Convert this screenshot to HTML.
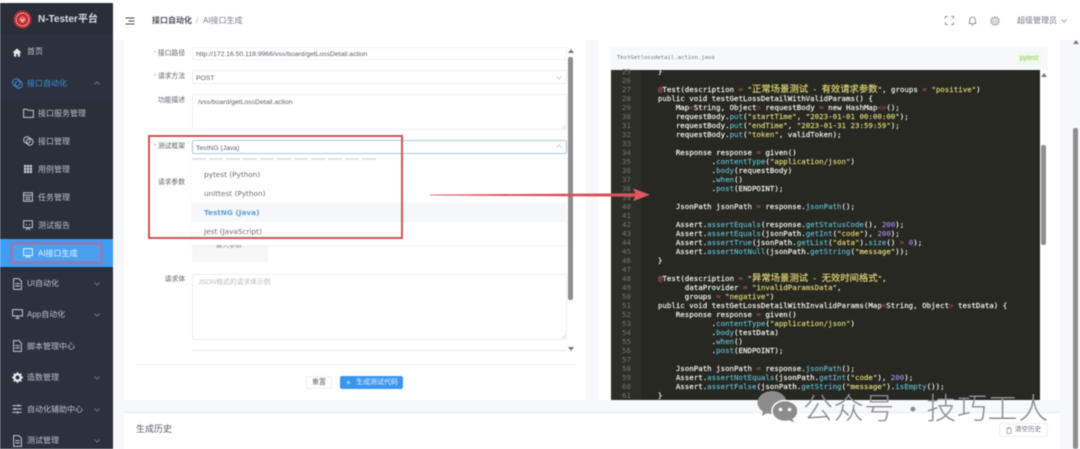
<!DOCTYPE html>
<html lang="zh"><head><meta charset="utf-8"><title>AI接口生成</title>
<style>
*{box-sizing:border-box}
html,body{margin:0;padding:0;width:1080px;height:449px;overflow:hidden;background:#f6f8fb}
body{font-family:"Liberation Sans","Noto Sans CJK SC",sans-serif;color:#606266;position:relative}
#root{position:absolute;left:0;top:0;width:1080px;height:449px;overflow:hidden;filter:blur(.45px)}
.a{position:absolute;white-space:nowrap}
.side{position:absolute;left:0;top:3px;width:113px;height:446px;background:#2c313d}
.sub{position:absolute;left:0;top:96px;width:113px;height:172px;background:#2a2f3a}
.m{position:absolute;font-size:8px;line-height:12px;color:#bcc2cc;white-space:nowrap}
.ic{position:absolute;fill:none;stroke:#c3c8d1;stroke-width:1}
.chev{position:absolute;left:94px;width:6px;height:4px;fill:none;stroke:#7d8492;stroke-width:.8}
.lb{position:absolute;font-size:6.8px;line-height:12px;color:#606266;white-space:nowrap;text-align:right;right:895px}
.in{position:absolute;left:192px;width:375px;background:#fff;border:1px solid #eceef1;border-radius:2px;font-size:6.8px;line-height:11px;padding:1px 3px;color:#5c5f66;white-space:nowrap}
.sb{position:absolute;background:#8e8e8e;border-radius:2px}
.tri{position:absolute;width:0;height:0;border-left:3px solid transparent;border-right:3px solid transparent}
.up{border-bottom:4px solid #777}.dn{border-top:4px solid #777}
pre{margin:0;font-family:"DejaVu Sans Mono","Liberation Mono","Noto Sans CJK SC",monospace;font-size:7.45px;line-height:9.02px;position:absolute;font-weight:400}
#code{left:640px;top:66.6px;color:#f8f8f2;width:400px;height:334px;overflow:hidden;-webkit-text-stroke:.15px currentColor}
#nums{left:622px;top:66.6px;color:#74756c;height:334px;overflow:hidden}
i{font-style:normal}
.s{color:#e2d878}.f{color:#5db8c9}.o{color:#a5504f}.n{color:#a583e0}.r{color:#c9504a}
.z{font-size:9.35px;line-height:0;font-family:"Noto Sans CJK SC",sans-serif}
.opt{position:absolute;left:204px;font-family:"DejaVu Sans",sans-serif;font-size:7.3px;line-height:12px;color:#6a6d73;white-space:nowrap}
</style></head><body><div id="root">

<div class="a" style="left:0;top:0;width:1080px;height:3px;background:#fff"></div>
<div class="a" style="left:113px;top:3px;width:967px;height:37px;background:#fff"></div>

<!-- Sidebar -->
<div class="side"><div class="sub"></div></div>
<div class="a" style="left:0;top:4px;width:113px;height:30px;background:#292e39"></div>
<svg class="a" style="left:13px;top:10px" width="19" height="19" viewBox="0 0 19 19"><circle cx="9.5" cy="9.5" r="9" fill="#b9272f"/><circle cx="9.5" cy="9.5" r="6.4" fill="none" stroke="#eec9b8" stroke-width="1.4" stroke-dasharray="1.5 1"/><circle cx="9.5" cy="9.5" r="3.6" fill="#d9595c"/><path d="M7.5 8.5l2 3 2-3" fill="none" stroke="#f5dcd0"/></svg>
<div class="a" style="left:38px;top:13px;font-size:10px;line-height:14px;font-weight:700;color:#d8dbe1">N-Tester平台</div>

<svg class="a" style="left:12px;top:48px" width="10" height="9" viewBox="0 0 10 9"><path d="M5 .5L.5 4.6H2v4h2.2V6h1.6v2.6H8v-4h1.5z" fill="#e6e8ec"/></svg>
<div class="m" style="left:27px;top:46px">首页</div>

<svg class="ic" style="left:12px;top:78px;stroke:#3f8fd8" width="11" height="11" viewBox="0 0 11 11"><circle cx="4.5" cy="4.5" r="3.8"/><circle cx="6.8" cy="6.6" r="3.6"/></svg>
<div class="m" style="left:27px;top:78px;color:#3c8fdc">接口自动化</div>
<svg class="chev" style="top:81px" viewBox="0 0 6 4"><path d="M.5 3.5L3 1l2.5 2.5"/></svg>

<svg class="ic" style="left:23px;top:108px" width="11" height="10" viewBox="0 0 11 10"><path d="M.6 1.2h3.4l1 1.2h5.4v7H.6z"/></svg>
<div class="m" style="left:38px;top:108px">接口服务管理</div>
<svg class="ic" style="left:23px;top:136px" width="11" height="10" viewBox="0 0 11 10"><circle cx="4" cy="4" r="3.3"/><circle cx="6.8" cy="5.8" r="3.3"/></svg>
<div class="m" style="left:38px;top:136px">接口管理</div>
<svg class="a" style="left:24px;top:165px" width="8" height="8" viewBox="0 0 8 8" fill="#d6d9df"><path d="M0 0h2.2v2.2H0zM2.9 0h2.2v2.2H2.9zM5.8 0H8v2.2H5.8zM0 2.9h2.2v2.2H0zM2.9 2.9h2.2v2.2H2.9zM5.8 2.9H8v2.2H5.8zM0 5.8h2.2V8H0zM2.9 5.8h2.2V8H2.9zM5.8 5.8H8V8H5.8z"/></svg>
<div class="m" style="left:38px;top:164px">用例管理</div>
<svg class="ic" style="left:23px;top:192px" width="10" height="10" viewBox="0 0 10 10"><path d="M.6.8h8.8v8.4H.6zM.6 3.2h8.8M2.4 5.4h5M2.4 7.4h5"/></svg>
<div class="m" style="left:38px;top:192px">任务管理</div>
<svg class="ic" style="left:23px;top:220px" width="10" height="11" viewBox="0 0 10 11"><path d="M.6.8h8.8v6.8H.6zM3 10l2-2.4L7 10M3 4.6h1M6 4.6h1"/></svg>
<div class="m" style="left:38px;top:220px">测试报告</div>

<div class="a" style="left:0;top:239px;width:113px;height:28px;background:#3d9cf3"></div>
<div class="a" style="left:10px;top:242px;width:93px;height:22px;border:3px solid #8f7ab8;border-radius:3px;background:#4aa0ef"></div>
<svg class="ic" style="left:23px;top:248px;stroke:#e6f1fc" width="10" height="11" viewBox="0 0 10 11"><path d="M.6.8h8.8v6.8H.6zM3 10l2-2.4L7 10M3 4.6h1M6 4.6h1"/></svg>
<div class="m" style="left:38px;top:248px;color:#e8f2fc">AI接口生成</div>

<svg class="ic" style="left:13px;top:278px" width="9" height="12" viewBox="0 0 9 12"><path d="M.6.6h5.2l2.6 2.6v8.2H.6zM2.2 5.6h4.6M2.2 8h4.6"/></svg>
<div class="m" style="left:27px;top:278px">UI自动化</div>
<svg class="chev" style="top:282px" viewBox="0 0 6 4"><path d="M.5.5L3 3l2.5-2.5"/></svg>

<svg class="ic" style="left:12px;top:309px" width="11" height="10" viewBox="0 0 11 10"><path d="M.6.6h9.8v6.4H.6zM3.4 9.4h4.2M5.5 7v2.4"/></svg>
<div class="m" style="left:27px;top:309px">App自动化</div>
<svg class="chev" style="top:313px" viewBox="0 0 6 4"><path d="M.5.5L3 3l2.5-2.5"/></svg>

<svg class="ic" style="left:13px;top:340px" width="9" height="12" viewBox="0 0 9 12"><path d="M.6.6h5.2l2.6 2.6v8.2H.6zM2.2 5.6h4.6M2.2 8h4.6"/></svg>
<div class="m" style="left:27px;top:341px">脚本管理中心</div>

<svg class="a" style="left:12px;top:372px" width="11" height="11" viewBox="0 0 11 11"><circle cx="5.5" cy="5.5" r="3.2" fill="none" stroke="#e6e8ec" stroke-width="2.4"/><path d="M5.5 0v2M5.5 9v2M0 5.5h2M9 5.5h2M1.6 1.6l1.4 1.4M8 8l1.4 1.4M1.6 9.4L3 8M8 3l1.4-1.4" stroke="#e6e8ec" stroke-width="1.4"/></svg>
<div class="m" style="left:27px;top:372px">造数管理</div>
<svg class="chev" style="top:376px" viewBox="0 0 6 4"><path d="M.5.5L3 3l2.5-2.5"/></svg>

<svg class="ic" style="left:12px;top:404px" width="10" height="10" viewBox="0 0 10 10"><path d="M.4 1.6h9.2M.4 5h9.2M.4 8.4h9.2M6.4.4v2.4M2.8 3.8v2.4M5.6 7.2v2.4"/></svg>
<div class="m" style="left:27px;top:404px">自动化辅助中心</div>
<svg class="chev" style="top:408px" viewBox="0 0 6 4"><path d="M.5.5L3 3l2.5-2.5"/></svg>

<svg class="ic" style="left:13px;top:435px" width="9" height="12" viewBox="0 0 9 12"><path d="M.6.6h5.2l2.6 2.6v8.2H.6zM2.2 5.6h4.6M2.2 8h4.6"/></svg>
<div class="m" style="left:27px;top:435px">测试管理</div>
<svg class="chev" style="top:439px" viewBox="0 0 6 4"><path d="M.5.5L3 3l2.5-2.5"/></svg>

<!-- Top bar -->
<svg class="a" style="left:125px;top:17px" width="10" height="8" viewBox="0 0 10 8" fill="none" stroke="#444" stroke-width="1.1"><path d="M.5 1h9M3.5 4h6M.5 7h9"/></svg>
<div class="a" style="left:152px;top:15px;font-size:8px;line-height:12px;font-weight:700;color:#4f5258">接口自动化</div>
<div class="a" style="left:196px;top:15px;font-size:8px;line-height:12px;color:#a9acb2">/</div>
<div class="a" style="left:203px;top:15px;font-size:8px;line-height:12px;color:#7b7e84">AI接口生成</div>
<svg class="a" style="left:945px;top:16px" width="9" height="9" viewBox="0 0 9 9" fill="none" stroke="#777" stroke-width=".8"><path d="M.5 2.8V.5h2.3M6.2.5h2.3v2.3M8.5 6.2v2.3H6.2M2.8 8.5H.5V6.2"/></svg>
<svg class="a" style="left:968px;top:16px" width="9" height="10" viewBox="0 0 9 10" fill="none" stroke="#777" stroke-width=".8"><path d="M.6 7.6h7.8M1.6 7.6V4a2.9 2.9 0 015.8 0v3.6M3.5 9.2h2"/></svg>
<svg class="a" style="left:990px;top:16px" width="10" height="10" viewBox="0 0 10 10" fill="none" stroke="#8a8a8a" stroke-width=".6"><circle cx="5" cy="5" r="1.5"/><circle cx="5" cy="5" r="3.3"/><circle cx="5" cy="5" r="4.3" stroke-width=".9" stroke-dasharray="1.6 1.1"/></svg>
<div class="a" style="left:1017px;top:15px;font-size:8px;line-height:12px;color:#77797f">超级管理员</div>
<svg class="a" style="left:1061px;top:19px" width="6" height="4" viewBox="0 0 6 4" fill="none" stroke="#888" stroke-width=".8"><path d="M.5.5L3 3l2.5-2.5"/></svg>

<!-- Left card -->
<div class="a" style="left:124px;top:40px;width:462px;height:360px;background:#fff"></div>
<div class="lb" style="top:48px"><span style="color:#e88;font-size:6px">* </span>接口路径</div>
<div class="in" style="top:47px;height:13px;border-color:#f0f1f4">http://172.16.50.118:9966/vss/board/getLossDetail.action</div>
<div class="lb" style="top:71px"><span style="color:#e88;font-size:6px">* </span>请求方法</div>
<div class="in" style="top:70px;height:14px;padding-top:1.5px">POST</div>
<svg class="a" style="left:556px;top:76px" width="6" height="4" viewBox="0 0 6 4" fill="none" stroke="#c6c8cc" stroke-width=".8"><path d="M.5.5L3 3l2.5-2.5"/></svg>
<div class="lb" style="top:95px">功能描述</div>
<div class="in" style="top:94px;height:36px;padding:1.5px 5px">/vss/board/getLossDetail.action</div>
<svg class="a" style="left:561px;top:124px" width="5" height="5" viewBox="0 0 5 5" fill="none" stroke="#aaa" stroke-width=".5"><path d="M1 4.5L4.5 1M3 4.5L4.5 3"/></svg>
<div class="lb" style="top:141px"><span style="color:#e88;font-size:6px">* </span>测试框架</div>
<div class="in" style="top:140px;height:14px;border-color:#a9c9da;padding-top:1.5px">TestNG (Java)</div>
<svg class="a" style="left:556px;top:144px" width="6" height="4" viewBox="0 0 6 4" fill="none" stroke="#c6c8cc" stroke-width=".8"><path d="M.5 3.5L3 1l2.5 2.5"/></svg>
<div class="a" style="left:192px;top:158px;width:185px;height:2px;background:repeating-linear-gradient(90deg,#e2e3e6 0 14px,#fff 14px 17px)"></div>
<div class="lb" style="top:177px">请求参数</div>

<div class="a" style="left:192px;top:240px;width:76px;height:22px;background:#f7f7f8"></div>
<div class="a" style="left:216px;top:241px;font-size:6.5px;line-height:9px;color:#8f9196">最大参数</div>

<!-- Dropdown -->
<div class="a" style="left:192px;top:161px;width:374px;height:84px;background:#fff;box-shadow:0 1px 3px rgba(0,0,0,.05)"></div>
<div class="a" style="left:192px;top:203px;width:374px;height:19px;background:#f5f7fa"></div>
<div class="opt" style="top:168.5px">pytest (Python)</div>
<div class="opt" style="top:187.5px">unittest (Python)</div>
<div class="opt" style="top:206.5px;color:#5aa3d8;font-weight:700">TestNG (Java)</div>
<div class="opt" style="top:225.5px">Jest (JavaScript)</div>

<div class="lb" style="top:274px">请求体</div>
<div class="in" style="top:274px;height:66px;padding:1.5px 5px;color:#b9bbc0;border-color:#eceef1">JSON格式的请求体示例</div>
<svg class="a" style="left:561px;top:334px" width="5" height="5" viewBox="0 0 5 5" fill="none" stroke="#aaa" stroke-width=".5"><path d="M1 4.5L4.5 1M3 4.5L4.5 3"/></svg>
<div class="a" style="left:192px;top:350px;width:375px;height:1px;background:#e9ebee"></div>
<div class="a" style="left:136px;top:364px;width:440px;height:1px;background:#f1f2f4"></div>
<div class="a" style="left:306px;top:376px;width:26px;height:13px;border:1px solid #eceef1;border-radius:2px;background:#fff;font-size:7px;line-height:11px;text-align:center;color:#606266">重置</div>
<div class="a" style="left:340px;top:376px;width:63px;height:13px;background:#3a96ec;border-radius:2px;font-size:7px;line-height:13px;color:#e6f2fd;padding-left:16px">生成测试代码</div>
<svg class="a" style="left:346px;top:380px" width="5" height="5" viewBox="0 0 5 5"><path d="M2.5 0l.7 1.8L5 2.5l-1.8.7L2.5 5l-.7-1.8L0 2.5l1.8-.7z" fill="#a9d2f6"/></svg>

<div class="sb" style="left:568px;top:57px;width:5px;height:243px"></div>
<div class="tri up" style="left:568px;top:49px"></div>
<div class="tri dn" style="left:568px;top:347px"></div>

<!-- Right card -->
<div class="a" style="left:598px;top:40px;width:462px;height:360px;background:#fff"></div>
<div class="a" style="left:610px;top:47px;width:438px;height:23px;background:#f6f8fb"></div>
<pre style="left:617px;top:54px;font-size:5.6px;line-height:8px;color:#71747a">TestGetlossdetail.action.java</pre>
<div class="a" style="left:1017px;top:52px;width:24px;height:13px;background:#f1f9ea;font-size:7px;line-height:13px;text-align:center;color:#8cc56a">pytest</div>

<div class="a" style="left:611px;top:70px;width:429px;height:330px;background:#272822"></div>
<div class="a" style="left:611px;top:70px;width:30px;height:330px;background:#2d2e28"></div>
<pre id="nums">25
26
27
28
29
30
31
32
33
34
35
36
37
38
39
40
41
42
43
44
45
46
47
48
49
50
51
52
53
54
55
56
57
58
59
60
61</pre>
<pre id="code">    }

    <i class="r">@</i>Test(description <i class="o">=</i> <i class="s">"<span class="z">正常场景测试</span> - <span class="z">有效请求参数</span>"</i>, groups <i class="o">=</i> <i class="s">"positive"</i>)
    public void testGetLossDetailWithValidParams() {
        Map<i class="o">&lt;</i>String, Object<i class="o">&gt;</i> requestBody <i class="o">=</i> new HashMap<i class="o">&lt;&gt;</i>();
        requestBody.<i class="f">put</i>(<i class="s">"startTime"</i>, <i class="s">"2023-01-01 00:00:00"</i>);
        requestBody.<i class="f">put</i>(<i class="s">"endTime"</i>, <i class="s">"2023-01-31 23:59:59"</i>);
        requestBody.<i class="f">put</i>(<i class="s">"token"</i>, validToken);

        Response response <i class="o">=</i> given()
                .<i class="f">contentType</i>(<i class="s">"application/json"</i>)
                .<i class="f">body</i>(requestBody)
                .<i class="f">when</i>()
                .<i class="f">post</i>(ENDPOINT);

        JsonPath jsonPath <i class="o">=</i> response.<i class="f">jsonPath</i>();

        Assert.<i class="f">assertEquals</i>(response.<i class="f">getStatusCode</i>(), <i class="n">200</i>);
        Assert.<i class="f">assertEquals</i>(jsonPath.<i class="f">getInt</i>(<i class="s">"code"</i>), <i class="n">200</i>);
        Assert.<i class="f">assertTrue</i>(jsonPath.<i class="f">getList</i>(<i class="s">"data"</i>).<i class="f">size</i>() <i class="o">&gt;</i> <i class="n">0</i>);
        Assert.<i class="f">assertNotNull</i>(jsonPath.<i class="f">getString</i>(<i class="s">"message"</i>));
    }

    <i class="r">@</i>Test(description <i class="o">=</i> <i class="s">"<span class="z">异常场景测试</span> - <span class="z">无效时间格式</span>"</i>,
          dataProvider <i class="o">=</i> <i class="s">"invalidParamsData"</i>,
          groups <i class="o">=</i> <i class="s">"negative"</i>)
    public void testGetLossDetailWithInvalidParams(Map<i class="o">&lt;</i>String, Object<i class="o">&gt;</i> testData) {
        Response response <i class="o">=</i> given()
                .<i class="f">contentType</i>(<i class="s">"application/json"</i>)
                .<i class="f">body</i>(testData)
                .<i class="f">when</i>()
                .<i class="f">post</i>(ENDPOINT);

        JsonPath jsonPath <i class="o">=</i> response.<i class="f">jsonPath</i>();
        Assert.<i class="f">assertNotEquals</i>(jsonPath.<i class="f">getInt</i>(<i class="s">"code"</i>), <i class="n">200</i>);
        Assert.<i class="f">assertFalse</i>(jsonPath.<i class="f">getString</i>(<i class="s">"message"</i>).<i class="f">isEmpty</i>());
    }</pre>

<div class="sb" style="left:1041px;top:145px;width:5px;height:100px"></div>
<div class="tri up" style="left:1041px;top:73px"></div>
<div class="sb" style="left:1073px;top:128px;width:5px;height:321px"></div>
<div class="tri up" style="left:1073px;top:40px"></div>

<!-- History card -->
<div class="a" style="left:124px;top:412px;width:936px;height:37px;background:#fff;border-top:1px solid #e8ebef"></div>
<div class="a" style="left:136px;top:423px;font-size:9px;line-height:13px;color:#55585e">生成历史</div>
<div class="a" style="left:999px;top:423px;width:49px;height:14px;border:1px solid #eceef1;border-radius:2px;background:#fff;font-size:6.5px;line-height:12px;text-align:right;padding-right:6px;color:#6f7278">清空历史</div>
<svg class="a" style="left:1006px;top:427px" width="6" height="7" viewBox="0 0 6 7" fill="none" stroke="#888" stroke-width=".6"><path d="M.4 1.4h5.2M1 1.4v5.2h4V1.4M2 1.4V.5h2v.9"/></svg>

<!-- Red annotation -->
<div class="a" style="left:148px;top:135px;width:255px;height:104px;border:2px solid #cc5559"></div>
<svg class="a" style="left:428px;top:184px" width="226" height="22" viewBox="0 0 226 22"><path d="M2 10.6L210 9.2V12.8L2 11.4z" fill="#dc5158"/><path d="M205 4.5L222 10.8 205 17l3-6.2z" fill="#e2575d"/></svg>

<!-- Watermark -->
<svg class="a" style="left:757px;top:391px" width="42" height="32" viewBox="0 0 42 32"><ellipse cx="15" cy="11.5" rx="14.5" ry="11.5" fill="#8c8c8c"/><path d="M6 19l-1 6 7-4z" fill="#8c8c8c"/><ellipse cx="28" cy="20" rx="13" ry="10.5" fill="#8c8c8c" stroke="#fff" stroke-width="1.5"/><path d="M35 27l2 4.5-6-3z" fill="#8c8c8c"/><circle cx="23.5" cy="18.5" r="1.8" fill="#fff"/><circle cx="32.5" cy="18.5" r="1.8" fill="#fff"/></svg>
<div class="a" style="left:803px;top:385px;font-family:'Noto Sans CJK SC',sans-serif;font-size:30px;line-height:42px;color:#8d8d8d;font-weight:300;letter-spacing:.6px">公众号<span style="margin:0 0 0 5px;font-size:26px">·</span>技巧工人</div>

</div></body></html>
